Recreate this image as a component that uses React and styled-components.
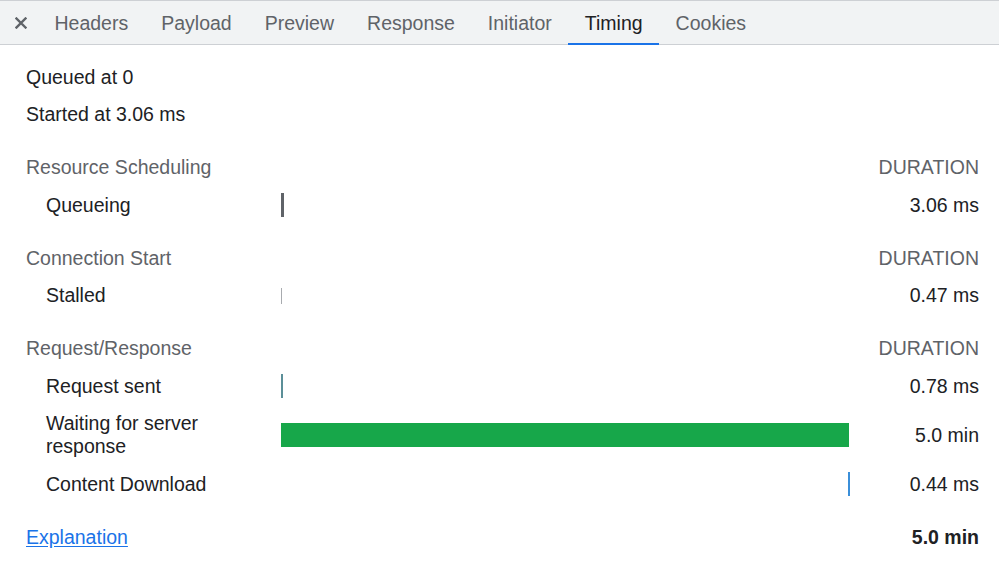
import React from 'react';
import styled, { createGlobalStyle } from 'styled-components';

const tabs = ['Headers', 'Payload', 'Preview', 'Response', 'Initiator', 'Timing', 'Cookies'];

const sections = [
  {
    title: 'Resource Scheduling',
    rows: [{ label: 'Queueing', value: '3.06 ms', kind: 'queue', left: 0, width: 3 }],
  },
  {
    title: 'Connection Start',
    rows: [{ label: 'Stalled', value: '0.47 ms', kind: 'stalled', left: 0, width: 1 }],
  },
  {
    title: 'Request/Response',
    rows: [
      { label: 'Request sent', value: '0.78 ms', kind: 'sent', left: 0, width: 2 },
      { label: 'Waiting for server response', value: '5.0 min', kind: 'waiting', left: 0, width: 568 },
      { label: 'Content Download', value: '0.44 ms', kind: 'download', left: 567, width: 2 },
    ],
  },
];

const App = () => {
  return (
    <>
      <GlobalStyle />
      <Page>
        <TabBar>
          <CloseButton>
            <svg width="12" height="12" viewBox="0 0 12 12">
              <path d="M1.5 1.5 L10.5 10.5 M10.5 1.5 L1.5 10.5" stroke="#5f6368" strokeWidth="2.4" strokeLinecap="square" />
            </svg>
          </CloseButton>
          {tabs.map((t) => (
            <Tab key={t} $active={t === 'Timing'}>
              {t}
            </Tab>
          ))}
        </TabBar>

        <Content>
          <InfoLine>Queued at 0</InfoLine>
          <InfoLine>Started at 3.06 ms</InfoLine>

          {sections.map((s) => (
            <Section key={s.title}>
              <SectionHead>
                <SectionTitle>{s.title}</SectionTitle>
                <span />
                <Duration>DURATION</Duration>
              </SectionHead>
              {s.rows.map((r) => (
                <Row key={r.label}>
                  <RowLabel>{r.label}</RowLabel>
                  <Track>
                    <Bar
                      $kind={r.kind}
                      style={{ marginLeft: r.left, width: r.width }}
                    />
                  </Track>
                  <Value>{r.value}</Value>
                </Row>
              ))}
            </Section>
          ))}

          <Footer>
            <Link href="#">Explanation</Link>
            <span />
            <Total>5.0 min</Total>
          </Footer>
        </Content>
      </Page>
    </>
  );
};

const GlobalStyle = createGlobalStyle`
  body {
    margin: 0;
    background: #ffffff;
    font-family: "Liberation Sans", Arial, Helvetica, sans-serif;
  }
`;

const Page = styled.div`
  width: 999px;
  height: 578px;
  overflow: hidden;
  background: #ffffff;
  color: #202124;
  font-size: 19.5px;
`;

const TabBar = styled.div`
  display: flex;
  align-items: stretch;
  height: 43px;
  background: #f1f3f4;
  border-top: 1px solid #cdd0d4;
  border-bottom: 1px solid #cdd0d4;
  padding-left: 8px;
`;

const CloseButton = styled.div`
  display: flex;
  align-items: center;
  justify-content: center;
  width: 26px;
  margin-right: 4px;
`;

const Tab = styled.div`
  display: flex;
  align-items: center;
  padding: 0 16.5px;
  color: ${(p) => (p.$active ? '#202124' : '#5f6368')};
  box-shadow: ${(p) => (p.$active ? 'inset 0 -2px 0 #1a73e8' : 'none')};
  margin-bottom: -1px;
`;

const Content = styled.div`
  padding: 14px 20px 0 26px;
`;

const InfoLine = styled.div`
  height: 37px;
  line-height: 37px;
`;

const grid = `
  display: grid;
  grid-template-columns: 255px 569px 1fr;
  align-items: center;
`;

const Section = styled.div`
  margin-top: 15px;
`;

const SectionHead = styled.div`
  ${grid}
  height: 38px;
`;

const SectionTitle = styled.div`
  color: #5f6368;
`;

const Duration = styled.div`
  color: #5f6368;
  text-align: right;
`;

const Row = styled.div`
  ${grid}
  padding: 7px 0;
  line-height: 23px;
`;

const RowLabel = styled.div`
  padding-left: 20px;
  padding-right: 40px;
`;

const Track = styled.div`
  display: flex;
  align-items: center;
  height: 100%;
`;

const barColors = {
  queue: '#5f6368',
  stalled: '#a8abaf',
  sent: '#5b8f98',
  waiting: '#17a74a',
  download: '#3b8fd9',
};

const Bar = styled.div`
  flex: none;
  height: ${(p) => (p.$kind === 'stalled' ? '16px' : '24px')};
  background: ${(p) => barColors[p.$kind]};
`;

const Value = styled.div`
  text-align: right;
`;

const Footer = styled.div`
  ${grid}
  height: 37px;
  margin-top: 16px;
`;

const Link = styled.a`
  color: #1a73e8;
  text-decoration: underline;
  text-underline-offset: 2px;
`;

const Total = styled.div`
  text-align: right;
  font-weight: bold;
`;

export default App;
